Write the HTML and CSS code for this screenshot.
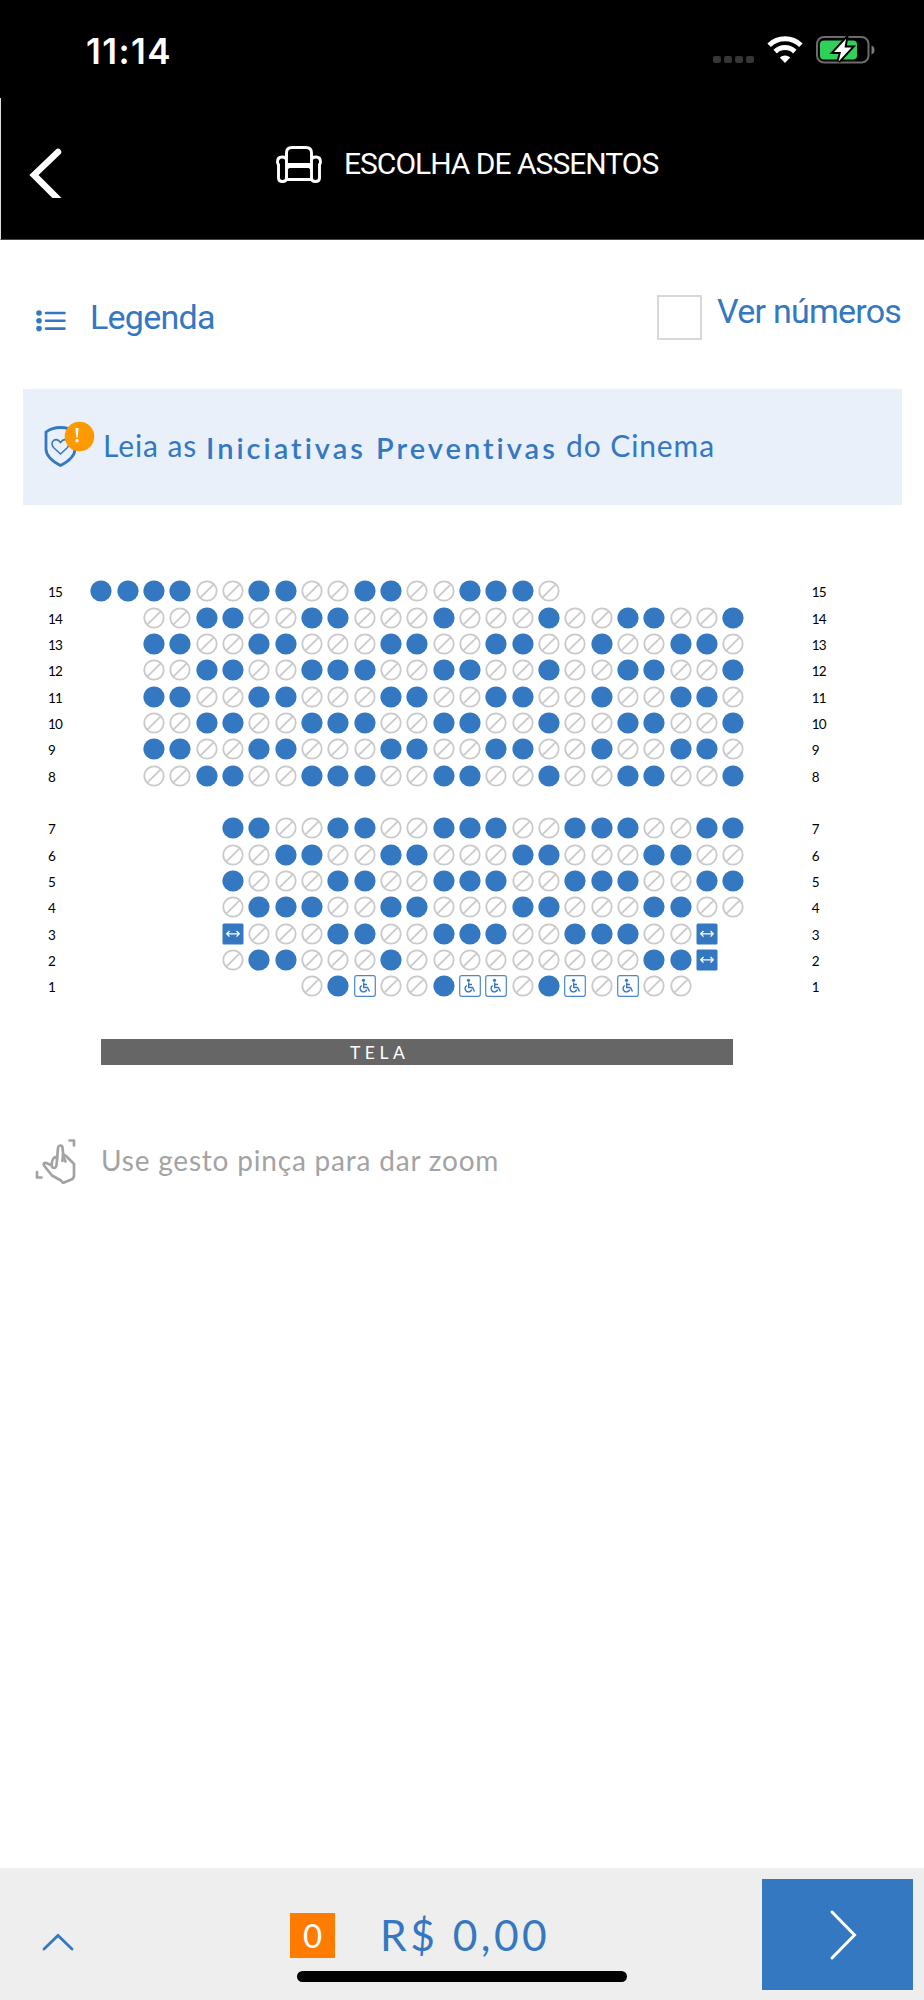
FILE: index.html
```
<!DOCTYPE html>
<html lang="pt-BR">
<head>
    <meta charset="UTF-8">
    <meta name="viewport" content="width=device-width, initial-scale=1.0">
    <title>Escolha de assentos</title>
    <link rel="stylesheet" href="styles.css">
</head>
<body>
    <div class="status-bar">
        <div class="time">11:14</div>
        <div class="status-icons">
            <div class="signal"><i></i><i></i><i></i><i></i></div>
            <svg class="wifi" width="36" height="28" viewBox="0 0 36 28">
                <g fill="none" stroke="#fff" stroke-width="5">
                    <path d="M2.1 9.2A23 23 0 0 1 33.9 9.2"/>
                    <path d="M8.2 15.6A14 14 0 0 1 27.8 15.6"/>
                </g>
                <path d="M18 27L12.8 21.6A7.5 7.5 0 0 1 23.2 21.6Z" fill="#fff"/>
            </svg>
            <svg class="battery" width="60" height="32" viewBox="0 0 60 32">
                <rect x="1" y="3" width="51.5" height="25.5" rx="7" fill="none" stroke="#6c6c6c" stroke-width="2"/>
                <path d="M55.5 11.5Q58.5 12.5 58.5 16T55.5 20.5Z" fill="#7d7d7d"/>
                <rect x="4" y="6.5" width="37" height="19" rx="4" fill="#30d158"/>
                <path d="M30 5L18 18H25L22.5 27.5L35.5 13.5H28.5Z" fill="#fff" stroke="#000" stroke-width="4" paint-order="stroke"/>
            </svg>
        </div>
    </div>

    <div class="header">
        <svg class="back" width="34" height="50" viewBox="0 0 34 50">
            <path d="M29 4L5 27L31 53" fill="none" stroke="#fff" stroke-width="6.5" stroke-linecap="round"/>
        </svg>
        <svg class="armchair" width="48" height="38" viewBox="0 0 48 38" fill="none" stroke="#fff" stroke-width="2.9" stroke-linejoin="round">
            <path d="M11.5 12V8Q11.5 2.5 17 2.5H31Q36.5 2.5 36.5 8V12"/>
            <path d="M11.5 20.5V15.5Q11.5 12 7 12Q2.5 12 2.5 17Q2.5 18.5 3.5 19.5V33Q3.5 36.5 7.5 36.5Q11.5 36.5 11.5 33ZM11.5 20.5V10M36.5 20.5V15.5Q36.5 12 41 12Q45.5 12 45.5 17Q45.5 18.5 44.5 19.5V33Q44.5 36.5 40.5 36.5Q36.5 36.5 36.5 33ZM36.5 20.5V10"/>
            <path d="M12 19.5H36M12 24Q12 21.5 15 21.5H33Q36 21.5 36 24M12 34.5H36"/>
        </svg>
        <h1 class="title">ESCOLHA DE ASSENTOS</h1>
    </div>

    <div class="toolbar">
        <svg class="list-icon" width="30" height="22" viewBox="0 0 30 22">
            <g fill="#3478c1"><circle cx="3" cy="3" r="2.8"/><circle cx="3" cy="10.8" r="2.8"/><circle cx="3" cy="18.6" r="2.8"/></g>
            <path d="M10 3H28.5M10 10.8H28.5M10 18.6H28.5" stroke="#3478c1" stroke-width="2.6" stroke-linecap="round"/>
        </svg>
        <div class="legend">Legenda</div>
        <div class="checkbox"></div>
        <div class="numbers">Ver números</div>
    </div>

    <div class="notice">
        <svg class="shield" width="52" height="48" viewBox="0 0 52 48">
            <path d="M17.5 6.5Q26 6.5 32 11V28Q32 37 17.5 44.5Q3 37 3 28V11Q9 6.5 17.5 6.5Z" fill="none" stroke="#3478c1" stroke-width="2.8"/>
            <path d="M17.5 33L10.5 26.5Q7.5 22.5 10.5 19.5Q14.5 17 17.5 21.5Q20.5 17 24.5 19.5Q27.5 22.5 24.5 26.5Z" fill="none" stroke="#3478c1" stroke-width="1.5"/>
            <circle cx="36.5" cy="15.5" r="14.8" fill="#ff9900"/>
            <path d="M32.3 7.5Q34 6 35.7 7.5L34.6 16.5H33.4Z" fill="#fff"/>
            <circle cx="34" cy="19.7" r="1.7" fill="#fff"/>
        </svg>
        <span class="notice-a">Leia as</span>
        <span class="notice-b">Iniciativas Preventivas</span>
        <span class="notice-c">do Cinema</span>
    </div>

    <div class="map" id="map"></div>
    <div class="screen">TELA</div>

    <div class="hint">
        <svg class="pinch" width="42" height="46" viewBox="0 0 42 46" fill="none" stroke="#a3a3a3" stroke-width="2.7" stroke-linejoin="round" stroke-linecap="round">
            <path d="M35.5 2.5H40V7.5M3 34V39.5H7.5"/>
            <path d="M28.5 23L29 16.5L32 18L40 26V38.5L38.5 41L29 45L27 42.5L18 37.5L10 27.5Q9 24.5 12 25L17 27"/>
            <path d="M23 21L24 10Q24.5 7.5 26.5 7.5Q28.5 7.5 28.5 10L29.5 19L31.5 23.5M23.5 18Q19 19 18 24Q17 30 20 30Q22 30 22.5 27L23.5 18"/>
        </svg>
        <div class="hint-text">Use gesto pinça para dar zoom</div>
    </div>

    <div class="footer">
        <svg class="up" width="34" height="20" viewBox="0 0 34 20">
            <path d="M3 17L17 3.5L31 17" fill="none" stroke="#3478c1" stroke-width="2.8" stroke-linecap="round"/>
        </svg>
        <div class="count">0</div>
        <div class="total">R$ 0,00</div>
        <div class="next">
            <svg width="28" height="52" viewBox="0 0 28 52">
                <path d="M3 3L25.5 26L3 49" fill="none" stroke="#fff" stroke-width="3" stroke-linecap="round"/>
            </svg>
        </div>
        <div class="home-indicator"></div>
    </div>

    <script src="script.js"></script>
</body>
</html>
```
FILE: styles.css
```
* {
    box-sizing: border-box;
}
body {
    display: flex;
    flex-direction: column;
    width: 924px;
    height: 2000px;
    margin: 0;
    background-color: #fff;
    font-family: Lato, sans-serif;
    color: #3478c1;
}
svg {
    display: block;
    flex: none;
}
.status-bar {
    display: flex;
    justify-content: space-between;
    height: 98px;
    padding: 30px 48px 0 86px;
    background-color: #000;
    color: #fff;
}
.time {
    font: 600 35px/42px Inter, sans-serif;
    letter-spacing: 1.4px;
}
.status-icons {
    display: flex;
    padding-top: 4px;
}
.signal {
    display: flex;
    gap: 3px;
    margin: 22px 13px 0 0;
}
.signal i {
    width: 8px;
    height: 7px;
    border-radius: 2px;
    background-color: #363636;
}
.wifi {
    margin: 2px 13px 0 0;
}
.header {
    display: flex;
    height: 142px;
    padding-left: 28px;
    border-left: 1px solid #ddd;
    border-bottom: 1px solid #4b4545;
    background-color: #000;
}
.back {
    margin-top: 50px;
}
.armchair {
    margin: 47px 0 0 212px;
}
.title {
    margin: 46px 0 0 21px;
    font: 400 30px/40px Roboto, sans-serif;
    letter-spacing: -1px;
    white-space: nowrap;
    color: #fff;
}
.toolbar {
    display: flex;
    height: 149px;
    padding-left: 36px;
    font-family: Roboto, sans-serif;
    font-size: 34px;
    line-height: 40px;
    letter-spacing: -0.75px;
    white-space: nowrap;
}
.list-icon {
    margin-top: 70px;
}
.legend {
    width: 591px;
    margin-top: 57px;
    padding-left: 24px;
}
.checkbox {
    width: 45px;
    height: 45px;
    margin: 55px 15px 0 0;
    border: 2px solid #d8d8d8;
}
.numbers {
    margin-top: 51px;
}
.notice {
    display: flex;
    width: 879px;
    height: 116px;
    margin-left: 23px;
    padding-left: 20px;
    background-color: #e9f0f9;
    font-size: 30px;
    line-height: 40px;
    letter-spacing: 0.9px;
    white-space: nowrap;
}
.shield {
    margin-top: 32px;
}
.notice-a {
    width: 103px;
    margin-top: 36px;
    padding-left: 8px;
}
.notice-b {
    width: 360px;
    margin-top: 39px;
    padding-left: 8px;
    font-size: 29px;
    font-weight: 600;
    letter-spacing: 3px;
}
.notice-c {
    margin-top: 36px;
    padding-left: 8px;
}
.map {
    margin-top: 73.1px;
}
.row {
    display: flex;
    align-items: center;
    height: 26.34px;
    padding-left: 48px;
}
.row.gap {
    margin-top: 26.34px;
}
.row-label {
    width: 40.2px;
    padding-top: 2px;
    font-size: 13.5px;
    line-height: 18px;
    letter-spacing: -0.8px;
    color: #000;
}
.seats {
    display: grid;
    grid-template-columns: repeat(25, 26.33px);
    width: 723.5px;
    justify-items: center;
}
.seat {
    width: 22px;
    height: 22px;
}
.screen {
    width: 632px;
    height: 26.5px;
    margin: 39.3px 0 0 101px;
    padding-left: 249px;
    background-color: #666;
    font-size: 17.5px;
    line-height: 28px;
    letter-spacing: 4.5px;
    color: #fff;
}
.hint {
    display: flex;
    margin: 73px 0 0 34px;
    color: #a3a3a3;
}
.hint-text {
    margin: 2px 0 0 25px;
    font-size: 28px;
    line-height: 40px;
    letter-spacing: 0.8px;
    white-space: nowrap;
}
.footer {
    position: relative;
    display: flex;
    height: 132px;
    margin-top: auto;
    background-color: #eee;
}
.up {
    margin: 64px 0 0 41px;
}
.count {
    width: 45px;
    height: 45px;
    margin: 45px 0 0 215px;
    background-color: #ff7c00;
    font-size: 33px;
    line-height: 44px;
    text-align: center;
    color: #fff;
}
.total {
    width: 427px;
    margin-top: 42px;
    padding-left: 45px;
    font-size: 42.5px;
    line-height: 50px;
    letter-spacing: 3.5px;
}
.next {
    display: flex;
    align-items: center;
    justify-content: center;
    width: 151px;
    height: 111px;
    margin-top: 11px;
    padding-left: 10px;
    background-color: #3478c1;
}
.home-indicator {
    position: absolute;
    left: 297px;
    bottom: 18px;
    width: 330px;
    height: 11px;
    border-radius: 6px;
    background-color: #000;
}
```
FILE: script.js
```
// # free, . taken, W wide seat, H wheelchair, space = no seat
const rows = [
    [15, '####..##..##..###.       '],
    [14, '  ..##..##...#...#..##..#'],
    [13, '  ##..##...##..##..#..##.'],
    [12, '  ..##..###..##..#..##..#'],
    [11, '  ##..##...##..##..#..##.'],
    [10, '  ..##..###..##..#..##..#'],
    [9, '  ##..##...##..##..#..##.'],
    [8, '  ..##..###..##..#..##..#'],
    [7, '     ##..##..###..###..##'],
    [6, '     ..##..##...##...##..'],
    [5, '     #...##..###..###..##'],
    [4, '     .###..##...##...##..'],
    [3, '     W...##..###..###..W '],
    [2, '     .##...#.........##W '],
    [1, '        .#H..#HH.#H.H..  ']
];

const shapes = {
    '#': '<circle cx="11" cy="11" r="10.6" fill="#3478c1"/>',
    '.': '<g fill="none" stroke="#cacaca" stroke-width="1.8"><circle cx="11" cy="11" r="9.7"/><path d="M4.3 17.7L17.7 4.3"/></g>',
    'W': '<rect x=".5" y=".5" width="21" height="21" rx="1.5" fill="#3478c1"/><path d="M5 10.8H17M7.5 8L4.7 10.8L7.5 13.6M14.5 8L17.3 10.8L14.5 13.6" fill="none" stroke="#fff" stroke-width="1.3"/>',
    'H': '<rect x=".7" y=".7" width="20.6" height="20.6" rx="2" fill="#fff" stroke="#4b88ca" stroke-width="1.2"/><circle cx="9.5" cy="5.3" r="1.6" fill="#3478c1"/><path d="M9.7 7.5V12.5H13.5L15.5 16.5M9.7 9.5H13M7.8 10.5A3.4 3.4 0 1 0 12.7 14.5" fill="none" stroke="#3478c1" stroke-width="1.4"/>'
};

const map = document.getElementById('map');
rows.forEach(([number, seats]) => {
    const row = document.createElement('div');
    row.className = number === 7 ? 'row gap' : 'row';
    const cells = [...seats].map(s => `<svg class="seat" viewBox="0 0 22 22">${shapes[s] || ''}</svg>`).join('');
    row.innerHTML = `<div class="row-label">${number}</div><div class="seats">${cells}</div><div class="row-label">${number}</div>`;
    map.appendChild(row);
});
```
